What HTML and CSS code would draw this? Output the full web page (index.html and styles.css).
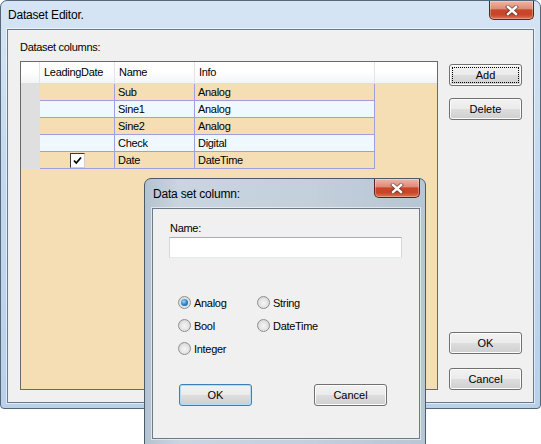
FILE: index.html
```html
<html lang="en">
<head>
  <meta charset="UTF-8">
  <title>Dataset Editor.</title>
  <link rel="stylesheet" href="styles.css">
</head>
<body>
  <div class="win editor">
    <div class="caption">
      <span class="caption-text">Dataset Editor.</span>
      <div class="close-btn">
        <svg width="14" height="11" viewBox="0 0 14 11">
          <path d="M3 2 L11 9 M11 2 L3 9" stroke="#3a2a28" stroke-width="4.2" stroke-linecap="square" opacity="0.55"/>
          <path d="M3 2 L11 9 M11 2 L3 9" stroke="#ffffff" stroke-width="2.4" stroke-linecap="square"/>
        </svg>
      </div>
    </div>
    <div class="client">
      <div class="main-col">
        <div class="lbl">Dataset columns:</div>
        <div class="grid">
          <div class="grid-head">
            <div class="hcell"></div>
            <div class="hcell">LeadingDate</div>
            <div class="hcell">Name</div>
            <div class="hcell">Info</div>
            <div class="hcell last"></div>
          </div>
          <div class="grid-row wheat">
            <div class="rowhead"></div>
            <div class="cell"></div>
            <div class="cell">Sub</div>
            <div class="cell">Analog</div>
          </div>
          <div class="grid-row blue">
            <div class="rowhead"></div>
            <div class="cell"></div>
            <div class="cell">Sine1</div>
            <div class="cell">Analog</div>
          </div>
          <div class="grid-row wheat">
            <div class="rowhead"></div>
            <div class="cell"></div>
            <div class="cell">Sine2</div>
            <div class="cell">Analog</div>
          </div>
          <div class="grid-row blue">
            <div class="rowhead"></div>
            <div class="cell"></div>
            <div class="cell">Check</div>
            <div class="cell">Digital</div>
          </div>
          <div class="grid-row wheat">
            <div class="rowhead"></div>
            <div class="cell check-cell">
              <span class="chk">
                <svg width="13" height="13" viewBox="0 0 13 13">
                  <path d="M3 6.5 L5.3 9 L10 3.5" stroke="#000" stroke-width="1.8" fill="none"/>
                </svg>
              </span>
            </div>
            <div class="cell">Date</div>
            <div class="cell">DateTime</div>
          </div>
        </div>
      </div>
      <div class="side">
        <button class="btn focus">Add</button>
        <button class="btn">Delete</button>
        <button class="btn push">OK</button>
        <button class="btn">Cancel</button>
      </div>
    </div>
  </div>

  <!-- dialog opened over the editor -->
  <div class="win dialog">
    <div class="caption">
      <span class="caption-text">Data set column:</span>
      <div class="close-btn wide">
        <svg width="14" height="11" viewBox="0 0 14 11">
          <path d="M3 2 L11 9 M11 2 L3 9" stroke="#3a2a28" stroke-width="4.2" stroke-linecap="square" opacity="0.55"/>
          <path d="M3 2 L11 9 M11 2 L3 9" stroke="#ffffff" stroke-width="2.4" stroke-linecap="square"/>
        </svg>
      </div>
    </div>
    <div class="client dlg-client">
      <div class="name-lbl">Name:</div>
      <div class="textbox"></div>
      <div class="types">
        <label class="opt"><span class="radio on"></span>Analog</label>
        <label class="opt"><span class="radio"></span>String</label>
        <label class="opt"><span class="radio"></span>Bool</label>
        <label class="opt"><span class="radio"></span>DateTime</label>
        <label class="opt"><span class="radio"></span>Integer</label>
      </div>
      <div class="dlg-buttons">
        <button class="btn default">OK</button>
        <button class="btn">Cancel</button>
      </div>
    </div>
  </div>
</body>
</html>
```

FILE: styles.css
```css
body {
  margin: 0;
  width: 541px;
  height: 444px;
  overflow: hidden;
  position: relative;
  background-color: white;
  font-family: "Liberation Sans", Arial, sans-serif;
  font-size: 11px;
  color: #000;
}

.win {
  box-sizing: border-box;
  border: 1px solid #56677a;
}

.editor {
  width: 541px;
  height: 409px;
  padding: 0 6px 5px 6px;
  border-radius: 7px 7px 4px 4px;
  background: linear-gradient(#d6e5f4, #c4d9ef 40%, #b8d0ea);
}

.caption {
  display: flex;
  align-items: flex-start;
  height: 28px;
}

.caption-text {
  font-size: 12px;
  line-height: 28px;
  padding-left: 1px;
  letter-spacing: -0.2px;
  color: #000;
}

.close-btn {
  margin-left: auto;
  width: 45px;
  height: 19px;
  box-sizing: border-box;
  border: 1px solid #5e2218;
  border-top: 0;
  border-radius: 0 0 5px 5px;
  background: linear-gradient(#efb4a5 0%, #df8d77 42%, #c8462b 50%, #c84529 75%, #dc7355 100%);
  box-shadow: inset 0 0 0 1px rgba(255, 255, 255, 0.3);
  display: flex;
  align-items: center;
  justify-content: center;
}

.close-btn.wide {
  width: 46px;
}

.client {
  box-sizing: border-box;
  background-color: #f0f0f0;
  border: 1px solid #6b7a8a;
  box-shadow: 0 0 0 1px rgba(255, 255, 255, 0.55);
}

.editor .client {
  height: 374px;
  display: flex;
  padding: 11px 11px 12px 12px;
}

.main-col {
  width: 418px;
}

.lbl {
  line-height: 13px;
  letter-spacing: -0.3px;
  margin-bottom: 7px;
}

/* grid */
.grid {
  box-sizing: border-box;
  height: 329px;
  border: 1px solid #6a6a6a;
  background-color: #f5deb3; /* wheat */
  overflow: hidden;
}

.grid-head {
  display: grid;
  grid-template-columns: 19px 75px 80px 180px 1fr;
  height: 22px;
  box-sizing: border-box;
  border-bottom: 1px solid #dcdde0;
  background: linear-gradient(#ffffff, #ffffff 45%, #f3f4f6);
}

.hcell {
  border-right: 1px solid #e3e4e7;
  padding-left: 4px;
  line-height: 21px;
  letter-spacing: -0.3px;
  white-space: nowrap;
}

.hcell.last {
  border-right: none;
}

.grid-row {
  display: grid;
  grid-template-columns: 19px 75px 80px 180px;
  height: 17px;
}

.rowhead {
  background-color: #dfdfdf;
}

.cell {
  box-sizing: border-box;
  border-right: 1px solid #9f9fe0;
  border-bottom: 1px solid #9f9fe0;
  padding-left: 3px;
  line-height: 16px;
  letter-spacing: -0.3px;
  white-space: nowrap;
}

.wheat .cell {
  background-color: #f5deb3;
}

.blue .cell {
  background-color: #f0f8ff; /* aliceblue */
}

.check-cell {
  display: flex;
  align-items: center;
  justify-content: center;
  padding-left: 0;
}

.chk {
  width: 15px;
  height: 15px;
  box-sizing: border-box;
  background-color: white;
  border: 1px solid;
  border-color: #3a3a3a #cfcfcf #cfcfcf #3a3a3a;
  display: flex;
  align-items: center;
  justify-content: center;
}

/* buttons */
.side {
  width: 73px;
  margin-left: 11px;
  padding-top: 23px;
  display: flex;
  flex-direction: column;
}

.btn {
  width: 73px;
  height: 22px;
  box-sizing: border-box;
  padding: 0;
  font-family: "Liberation Sans", Arial, sans-serif;
  font-size: 11px;
  color: #000;
  border: 1px solid #707070;
  border-radius: 3px;
  background: linear-gradient(#f2f2f2 0%, #ebebeb 48%, #dddddd 52%, #cfcfcf 100%);
  box-shadow: inset 0 0 0 1px #fbfbfb;
}

.side .btn + .btn {
  margin-top: 12px;
}

.side .btn.push {
  margin-top: auto;
}

.side .btn.push + .btn {
  margin-top: 14px;
}

.btn.focus {
  outline: 1px dotted #000;
  outline-offset: -4px;
}

.btn.default {
  border-color: #3c7fb1;
  box-shadow: inset 0 0 0 1px #b0def6;
}

/* column dialog */
.dialog {
  position: absolute;
  left: 144px;
  top: 178px;
  width: 282px;
  height: 268px;
  padding: 0 5px 0 7px;
  border-color: #4d5b69;
  border-radius: 7px 7px 0 0;
  background: linear-gradient(90deg, #b4c3d1, #c9d5e0 12%, #c3cfdb 60%, #b7c6d4);
}

.dialog .caption {
  height: 29px;
}

.dialog .caption-text {
  line-height: 30px;
}

.dlg-client {
  height: 231px;
  padding: 13px 0 0 16px;
}

.name-lbl {
  line-height: 13px;
  padding-left: 1px;
  letter-spacing: -0.3px;
}

.textbox {
  width: 233px;
  height: 21px;
  box-sizing: border-box;
  margin-top: 2px;
  background-color: white;
  border: 1px solid;
  border-color: #abadb3 #d5d9df #e3e9ef #d5d9df;
}

.types {
  display: grid;
  grid-template-columns: 79px 100px;
  grid-auto-rows: 23px;
  margin-top: 33px;
  margin-left: 9px;
}

.opt {
  display: flex;
  align-items: center;
  gap: 3px;
  letter-spacing: -0.3px;
}

.radio {
  position: relative;
  width: 13px;
  height: 13px;
  box-sizing: border-box;
  border-radius: 50%;
  border: 1px solid #8e8f8f;
  background: radial-gradient(circle at 50% 55%, #f6f6f6 0, #e2e2e2 55%, #c8c8c8 100%);
}

.radio.on::after {
  content: '';
  position: absolute;
  left: 2px;
  top: 2px;
  width: 7px;
  height: 7px;
  border-radius: 50%;
  background: radial-gradient(circle at 40% 35%, #9bd8f8 0, #2b7ec4 55%, #134a80 100%);
}

.dlg-buttons {
  display: flex;
  gap: 62px;
  margin-top: 24px;
  margin-left: 10px;
}
```
